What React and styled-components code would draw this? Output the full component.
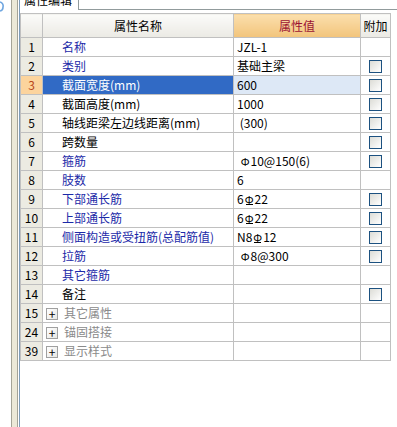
import styled, { createGlobalStyle, css } from "styled-components";

const rows = [
  { n: "1", name: "名称", tone: "blue", value: "JZL-1" },
  { n: "2", name: "类别", tone: "blue", value: "基础主梁", check: true },
  { n: "3", name: "截面宽度(mm)", value: "600", check: true, selected: true },
  { n: "4", name: "截面高度(mm)", value: "1000", check: true },
  { n: "5", name: "轴线距梁左边线距离(mm)", value: " (300)", check: true },
  { n: "6", name: "跨数量", value: "", check: true },
  { n: "7", name: "箍筋", tone: "blue", value: [" ", ["a", "Φ"], "10@150(6)"], check: true },
  { n: "8", name: "肢数", tone: "blue", value: "6" },
  { n: "9", name: "下部通长筋", tone: "blue", value: ["6", ["b", "Φ"], "22"], check: true },
  { n: "10", name: "上部通长筋", tone: "blue", value: ["6", ["b", "Φ"], "22"], check: true },
  { n: "11", name: "侧面构造或受扭筋(总配筋值)", tone: "blue", value: ["N8", ["b", "Φ"], "12"], check: true },
  { n: "12", name: "拉筋", tone: "blue", value: [" ", ["a", "Φ"], "8@300"], check: true },
  { n: "13", name: "其它箍筋", tone: "blue", value: "" },
  { n: "14", name: "备注", value: "", check: true },
  { n: "15", name: "其它属性", group: true },
  { n: "24", name: "锚固搭接", group: true },
  { n: "39", name: "显示样式", group: true },
];

const GlobalStyle = createGlobalStyle`
  html, body {
    margin: 0;
    padding: 0;
    background: #fff;
  }
  body {
    font-family: "Noto Sans CJK SC", "Noto Sans", sans-serif;
    font-size: 12px;
    color: #000;
  }
`;

const App = () => {
  const renderValue = (value) => {
    if (!Array.isArray(value)) return value;
    return value.map((part, i) =>
      Array.isArray(part) ? (
        <Grade key={i} $bar={part[0] === "b"}>{part[1]}</Grade>
      ) : (
        <span key={i}>{part}</span>
      )
    );
  };

  return (
    <>
      <GlobalStyle />
      <Page>
        <Gutter>
          <GutterIcon width="4" height="12" viewBox="0 0 4 12">
            <path d="M0 2 A4 4 0 0 1 3 7 A4 4 0 0 1 0 11" fill="none" stroke="#6fa6e0" strokeWidth="1.6" />
          </GutterIcon>
          <Rail />
        </Gutter>
        <Panel>
          <TabBar>
            <Tab>
              <TabLabel>属性编辑</TabLabel>
            </Tab>
          </TabBar>
          <GridWrap>
            <Grid>
              <colgroup>
                <col style={{ width: 22 }} />
                <col style={{ width: 191 }} />
                <col style={{ width: 127 }} />
                <col style={{ width: 30 }} />
              </colgroup>
              <thead>
                <tr>
                  <HeadCell />
                  <HeadCell>属性名称</HeadCell>
                  <HeadCell $accent>属性值</HeadCell>
                  <HeadCell>附加</HeadCell>
                </tr>
              </thead>
              <tbody>
                {rows.map((row) => (
                  <tr key={row.n}>
                    <NumCell $active={row.selected}>{row.n}</NumCell>
                    <NameCell $tone={row.group ? "gray" : row.tone} $selected={row.selected}>
                      {row.group && <Expander>+</Expander>}
                      {row.name}
                    </NameCell>
                    <ValueCell $selected={row.selected}>{renderValue(row.value)}</ValueCell>
                    <CheckCell>{row.check && <CheckBox />}</CheckCell>
                  </tr>
                ))}
              </tbody>
            </Grid>
          </GridWrap>
        </Panel>
      </Page>
    </>
  );
};

const Page = styled.div`
  display: flex;
  width: 397px;
  height: 427px;
  overflow: hidden;
`;

const Gutter = styled.div`
  position: relative;
  width: 19px;
  flex: none;
  display: flex;
  padding-left: 11px;
  box-sizing: border-box;
`;

const GutterIcon = styled.svg`
  position: absolute;
  left: 0;
  top: 0;
`;

const Rail = styled.div`
  width: 5px;
  border-left: 1px solid #a5a497;
  border-right: 1px solid #a5a497;
  background: #ece9d8;
`;

const Panel = styled.div`
  flex: 1;
  display: flex;
  flex-direction: column;
  border-left: 1px solid #7f9db9;
  min-width: 0;
`;

const TabBar = styled.div`
  height: 9px;
  flex: none;
  display: flex;
  border-bottom: 1px solid #919b9c;
`;

const Tab = styled.div`
  width: 59px;
  height: 10px;
  overflow: hidden;
  background: #fff;
  border-right: 1px solid #919b9c;
  box-sizing: border-box;
  padding-left: 4px;
`;

const TabLabel = styled.div`
  margin-top: -8px;
  line-height: 16px;
  font-size: 12px;
  color: #000;
  white-space: nowrap;
`;

const GridWrap = styled.div`
  padding-top: 3px;
`;

const Grid = styled.table`
  border-collapse: collapse;
  table-layout: fixed;
  width: 371px;
  border: 1px solid #b4b4b4;

  td,
  th {
    border: 1px solid #c0c0c0;
    padding: 0;
    white-space: nowrap;
    overflow: hidden;
  }
`;

const HeadCell = styled.th`
  height: 23px;
  font-weight: normal;
  font-size: 12px;
  text-align: center;
  color: ${(p) => (p.$accent ? "#9c1233" : "#000")};
  background: ${(p) =>
    p.$accent
      ? "linear-gradient(#fbdfad, #f2c47b)"
      : "linear-gradient(#fbfbf9, #ebeae4)"};
`;

const NumCell = styled.td`
  height: 18px;
  line-height: 18px;
  text-align: center;
  font-size: 12px;
  background: ${(p) => (p.$active ? "#fcd49d" : "#ecebe2")};
  color: ${(p) => (p.$active ? "#b9461a" : "#000")};
`;

const toneColor = {
  blue: "#1c2aa8",
  gray: "#8a8a8a",
};

const NameCell = styled.td`
  line-height: 18px;
  padding-left: 19px !important;
  color: ${(p) => toneColor[p.$tone] || "#000"};
  ${(p) =>
    p.$tone === "gray" &&
    css`
      padding-left: 3px !important;
    `}
  ${(p) =>
    p.$selected &&
    css`
      background: #316ac5;
      color: #fff;
    `}
`;

const Expander = styled.span`
  display: inline-flex;
  align-items: center;
  justify-content: center;
  width: 10px;
  height: 10px;
  margin-right: 6px;
  border: 1px solid #a0a0a0;
  background: linear-gradient(135deg, #ffffff, #e8e8e4);
  color: #000;
  font-size: 12px;
  line-height: 10px;
  vertical-align: -1px;
`;

const ValueCell = styled.td`
  line-height: 18px;
  padding-left: 3px !important;
  white-space: pre !important;
  background: ${(p) => (p.$selected ? "#dde8f6" : "#fff")};
`;

const Grade = styled.span`
  position: relative;
  display: inline-block;
  font-size: 11px;
  margin: 0 1px;
  ${(p) =>
    p.$bar &&
    css`
      &::after {
        content: "";
        position: absolute;
        left: 1px;
        right: 1px;
        bottom: 3px;
        height: 1px;
        background: #000;
      }
    `}
`;

const CheckCell = styled.td`
  text-align: center;
  line-height: 0;
`;

const CheckBox = styled.span`
  display: inline-block;
  width: 11px;
  height: 11px;
  border: 1px solid #1c5180;
  background: linear-gradient(135deg, #dcdcd6, #ffffff);
`;

export default App;
